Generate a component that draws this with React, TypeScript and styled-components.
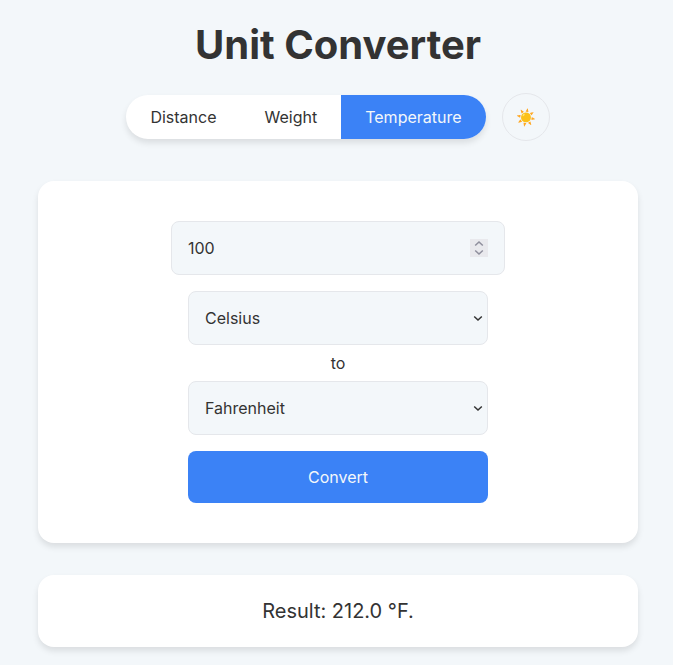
import React, { useRef, useState } from "react";
import styled, { createGlobalStyle } from "styled-components";

const GlobalStyle = createGlobalStyle`
  *, *::before, *::after { box-sizing: border-box; }
  body {
    margin: 0;
    background: #f3f7fa;
    color: #333333;
    font-family: Inter, sans-serif;
    font-size: 16px;
    line-height: 24px;
  }
  button, input, select { font: inherit; color: inherit; }
`;

const Page = styled.main`
  display: flex;
  flex-direction: column;
  align-items: center;
  gap: 32px;
  max-width: 635px;
  margin: 0 auto;
  padding: 20px 16px 20px 19px;
`;

const Header = styled.header`
  display: flex;
  flex-direction: column;
  align-items: center;
  gap: 24px;
  padding-bottom: 8px;
`;

const Title = styled.h1`
  margin: 0;
  font-size: 40px;
  font-weight: 700;
  line-height: 49px;
`;

const Nav = styled.nav`
  display: flex;
  align-items: center;
  gap: 16px;
`;

const Tabs = styled.div`
  display: flex;
  overflow: hidden;
  border-radius: 50px;
  background: #ffffff;
  box-shadow: 0 4px 6px rgba(0, 0, 0, 0.1);
`;

const Tab = styled.button<{ $active: boolean }>`
  padding: 10px 24px;
  border: 0;
  background: ${({ $active }) => ($active ? "#3b82f6" : "transparent")};
  color: ${({ $active }) => ($active ? "#f3f7fa" : "inherit")};
  cursor: pointer;
`;

const ThemeButton = styled.button`
  width: 48px;
  height: 48px;
  padding: 0;
  border: 1px solid #e5e7eb;
  border-radius: 50%;
  background: transparent;
  cursor: pointer;
`;

const Card = styled.section`
  width: 100%;
  border-radius: 16px;
  background: #ffffff;
  box-shadow: 0 4px 6px rgba(0, 0, 0, 0.1);
`;

const Form = styled.form`
  display: flex;
  flex-direction: column;
  align-items: center;
  gap: 16px;
  padding: 40px;
`;

const AmountField = styled.div`
  display: flex;
  align-items: center;
  width: 100%;
  max-width: 334px;
  height: 54px;
  padding: 0 16px;
  border: 1px solid #e5e7eb;
  border-radius: 8px;
  background: #f3f7fa;
`;

const AmountInput = styled.input`
  flex: 1;
  min-width: 0;
  padding: 0;
  border: 0;
  outline: 0;
  background: transparent;
  appearance: textfield;
  &::-webkit-inner-spin-button { appearance: none; margin: 0; }
`;

const Stepper = styled.div`
  display: flex;
  flex-direction: column;
  width: 18px;
  background: #e9e9ed;
  color: #8f8f9d;
`;

const StepButton = styled.button`
  display: flex;
  align-items: center;
  justify-content: center;
  height: 9px;
  padding: 0;
  border: 0;
  background: transparent;
`;

const Units = styled.div`
  display: flex;
  flex-direction: column;
  align-items: center;
  gap: 6px;
  width: 100%;
  max-width: 300px;
`;

const SelectBox = styled.div`
  display: grid;
  align-items: center;
  width: 100%;
  > * { grid-area: 1 / 1; }
  > svg { justify-self: end; margin-right: 6px; pointer-events: none; }
`;

const UnitSelect = styled.select`
  width: 100%;
  height: 54px;
  padding: 0 24px 0 16px;
  border: 1px solid #e5e7eb;
  border-radius: 8px;
  background: #f3f7fa;
  appearance: none;
`;

const ConvertButton = styled.button`
  width: 100%;
  max-width: 300px;
  padding: 14px;
  border: 0;
  border-radius: 8px;
  background: #3b82f6;
  color: #f3f7fa;
  cursor: pointer;
`;

const Result = styled(Card)`
  padding: 24px;
  font-size: 20px;
  text-align: center;
`;

const categories = ["Distance", "Weight", "Temperature"];
const units = ["Celsius", "Fahrenheit", "Kelvin"];

function Chevron({ up = false }: { up?: boolean }) {
  return (
    <svg width="8" height="5" viewBox="0 0 8 5" fill="currentColor" overflow="visible" aria-hidden="true">
      <path d={up ? "M-0.3 4.1 L4 -0.1 L8.3 4.1 L7.3 5.1 L4 1.9 L0.7 5.1 Z" : "M-0.3 0.9 L4 5.1 L8.3 0.9 L7.3 -0.1 L4 3.1 L0.7 -0.1 Z"} />
    </svg>
  );
}

function UnitPicker({ label, initial }: { label: string; initial: string }) {
  return (
    <SelectBox>
      <UnitSelect aria-label={label} defaultValue={initial}>
        {units.map((unit) => <option key={unit}>{unit}</option>)}
      </UnitSelect>
      <Chevron />
    </SelectBox>
  );
}

export default function App() {
  const [category, setCategory] = useState("Temperature");
  const amount = useRef<HTMLInputElement>(null);
  return (
    <Page>
      <GlobalStyle />
      <Header>
        <Title>Unit Converter</Title>
        <Nav>
          <Tabs>
            {categories.map((name) => (
              <Tab key={name} type="button" $active={name === category} onClick={() => setCategory(name)}>
                {name}
              </Tab>
            ))}
          </Tabs>
          <ThemeButton type="button" aria-label="Toggle theme">☀️</ThemeButton>
        </Nav>
      </Header>
      <Card>
        <Form onSubmit={(event) => event.preventDefault()}>
          <AmountField>
            <AmountInput ref={amount} type="number" aria-label="Amount" defaultValue={100} />
            <Stepper>
              <StepButton type="button" aria-label="Increase" onClick={() => amount.current?.stepUp()}>
                <Chevron up />
              </StepButton>
              <StepButton type="button" aria-label="Decrease" onClick={() => amount.current?.stepDown()}>
                <Chevron />
              </StepButton>
            </Stepper>
          </AmountField>
          <Units>
            <UnitPicker label="From unit" initial="Celsius" />
            <span>to</span>
            <UnitPicker label="To unit" initial="Fahrenheit" />
          </Units>
          <ConvertButton type="submit">Convert</ConvertButton>
        </Form>
      </Card>
      <Result as="output">Result: 212.0 °F.</Result>
    </Page>
  );
}
